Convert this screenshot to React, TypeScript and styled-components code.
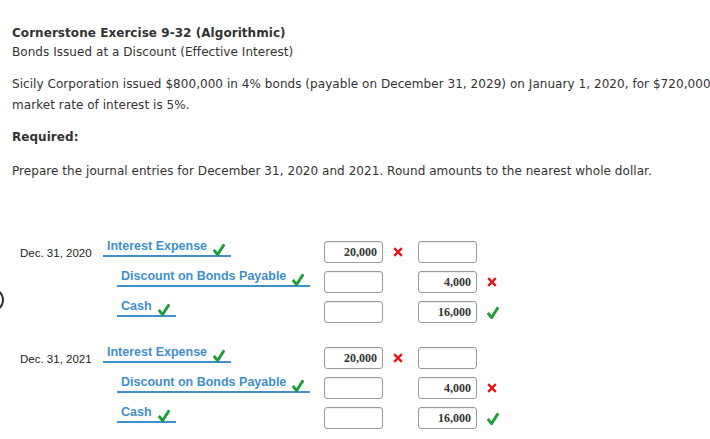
import React from "react";
import styled, { createGlobalStyle } from "styled-components";

const GlobalStyle = createGlobalStyle`
  html, body {
    margin: 0;
    padding: 0;
    background: #fff;
  }
  body {
    font-family: "DejaVu Sans", Verdana, sans-serif;
    color: #333;
    overflow: hidden;
  }
`;

type Mark = "check" | "cross" | null;

interface Entry {
  account: string;
  indent?: boolean;
  debit?: string;
  debitMark?: Mark;
  credit?: string;
  creditMark?: Mark;
}

interface JournalBlock {
  date: string;
  entries: Entry[];
}

const BLOCKS: JournalBlock[] = [
  {
    date: "Dec. 31, 2020",
    entries: [
      { account: "Interest Expense", debit: "20,000", debitMark: "cross" },
      {
        account: "Discount on Bonds Payable",
        indent: true,
        credit: "4,000",
        creditMark: "cross",
      },
      { account: "Cash", indent: true, credit: "16,000", creditMark: "check" },
    ],
  },
  {
    date: "Dec. 31, 2021",
    entries: [
      { account: "Interest Expense", debit: "20,000", debitMark: "cross" },
      {
        account: "Discount on Bonds Payable",
        indent: true,
        credit: "4,000",
        creditMark: "cross",
      },
      { account: "Cash", indent: true, credit: "16,000", creditMark: "check" },
    ],
  },
];

const CheckIcon = () => (
  <svg width="12" height="13" viewBox="0 0 12 13">
    <path
      d="M0.8 6.8 L4.6 11.6 L11.2 1.2"
      fill="none"
      stroke="#1f9d3a"
      strokeWidth="2.9"
      strokeLinejoin="miter"
    />
  </svg>
);

const CrossIcon = () => (
  <svg width="10" height="10" viewBox="0 0 10 10">
    <path
      d="M1.2 1.2 L8.8 8.8 M8.8 1.2 L1.2 8.8"
      fill="none"
      stroke="#e8141b"
      strokeWidth="2.4"
    />
  </svg>
);

const MarkIcon: React.FC<{ mark?: Mark }> = ({ mark }) => {
  if (mark === "check") return <CheckIcon />;
  if (mark === "cross") return <CrossIcon />;
  return null;
};

const App: React.FC = () => {
  return (
    <>
      <GlobalStyle />
      <StyledPage>
        <StyledTitle>Cornerstone Exercise 9-32 (Algorithmic)</StyledTitle>
        <StyledSubtitle>
          Bonds Issued at a Discount (Effective Interest)
        </StyledSubtitle>
        <StyledParagraph>
          Sicily Corporation issued $800,000 in 4% bonds (payable on December
          31, 2029) on January 1, 2020, for $720,000. The
          <br />
          market rate of interest is 5%.
        </StyledParagraph>
        <StyledRequired>Required:</StyledRequired>
        <StyledInstruction>
          Prepare the journal entries for December 31, 2020 and 2021. Round
          amounts to the nearest whole dollar.
        </StyledInstruction>

        <StyledJournal>
          {BLOCKS.map((block) => (
            <StyledBlock key={block.date}>
              {block.entries.map((entry, index) => (
                <StyledRow key={entry.account}>
                  <StyledDate>{index === 0 ? block.date : ""}</StyledDate>
                  <StyledAccountCell>
                    <StyledAccount indent={entry.indent}>
                      {entry.account}
                      <MarkIcon mark="check" />
                    </StyledAccount>
                  </StyledAccountCell>
                  <StyledAmountBox>{entry.debit}</StyledAmountBox>
                  <StyledMarkCell>
                    <MarkIcon mark={entry.debitMark} />
                  </StyledMarkCell>
                  <StyledAmountBox>{entry.credit}</StyledAmountBox>
                  <StyledMarkCell>
                    <MarkIcon mark={entry.creditMark} />
                  </StyledMarkCell>
                </StyledRow>
              ))}
            </StyledBlock>
          ))}
        </StyledJournal>
        <StyledSideButton />
      </StyledPage>
    </>
  );
};
export default App;

const StyledPage = styled.div`
  position: relative;
  width: 710px;
  height: 439px;
  padding: 0 0 0 12px;
  box-sizing: border-box;
  font-size: 12px;
  letter-spacing: 0.05px;
  overflow: hidden;
`;

const StyledTitle = styled.h1`
  margin: 0;
  padding-top: 26px;
  font-size: 12px;
  font-weight: 700;
  line-height: 15px;
  color: #333;
`;

const StyledSubtitle = styled.p`
  margin: 4px 0 0;
  line-height: 15px;
`;

const StyledParagraph = styled.p`
  margin: 14px 0 0;
  white-space: nowrap;
  line-height: 21px;
`;

const StyledRequired = styled.p`
  margin: 14px 0 0;
  font-weight: 700;
  line-height: 15px;
`;

const StyledInstruction = styled.p`
  margin: 19px 0 0;
  line-height: 15px;
`;

const StyledJournal = styled.div`
  margin-top: 62px;
  padding-left: 8px;
  display: flex;
  flex-direction: column;
  gap: 16px;
  letter-spacing: 0;
`;

const StyledBlock = styled.div`
  display: flex;
  flex-direction: column;
`;

const StyledRow = styled.div`
  display: grid;
  grid-template-columns: 83px 221px 59px 35px 59px 30px;
  height: 30px;
  align-items: start;
`;

const StyledDate = styled.div`
  padding-top: 5px;
  font-family: "Liberation Sans", Arial, sans-serif;
  font-size: 11.5px;
  line-height: 14px;
  color: #222;
`;

const StyledAccountCell = styled.div`
  display: flex;
`;

const StyledAccount = styled.div<{ indent?: boolean }>`
  display: inline-flex;
  align-items: flex-end;
  gap: 6px;
  margin-left: ${(props) => (props.indent ? "14px" : "0")};
  margin-top: -2px;
  padding: 0 6px 2px 4px;
  border-bottom: 2px solid #3f8fca;
  font-family: "Liberation Sans", Arial, sans-serif;
  font-weight: 700;
  font-size: 12.5px;
  line-height: 14px;
  color: #3f8fca;

  svg {
    margin-bottom: -3px;
  }
`;

const StyledAmountBox = styled.div`
  height: 22px;
  box-sizing: border-box;
  border: 1px solid #9a9a9a;
  border-radius: 3px;
  box-shadow: inset 0 1px 1px rgba(0, 0, 0, 0.08);
  padding: 0 5px;
  text-align: right;
  font-family: "Liberation Serif", "Times New Roman", serif;
  font-weight: 700;
  font-size: 12px;
  line-height: 20px;
  color: #333;
`;

const StyledMarkCell = styled.div`
  display: flex;
  align-items: center;
  height: 22px;
  padding-left: 10px;
`;

const StyledSideButton = styled.div`
  position: absolute;
  left: -20px;
  top: 288px;
  width: 20px;
  height: 20px;
  border: 2.5px solid #333;
  border-radius: 50%;
`;
